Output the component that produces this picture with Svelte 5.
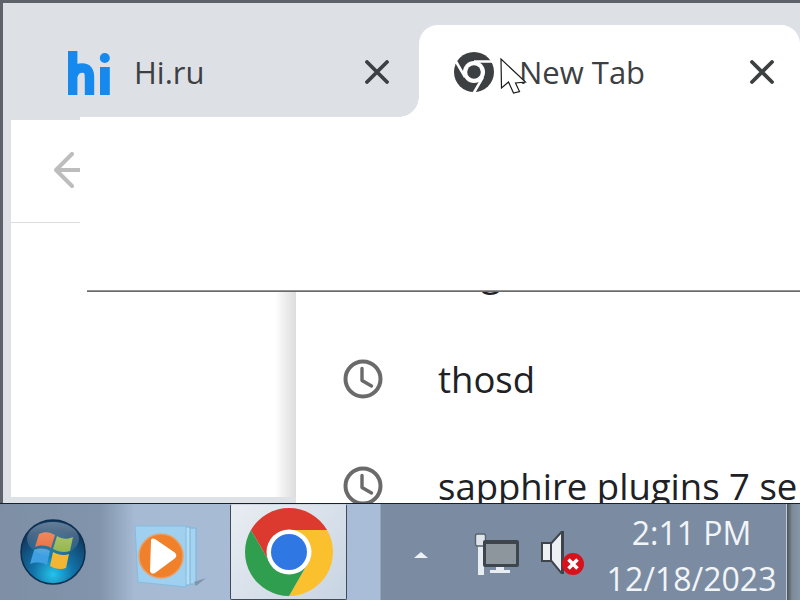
<script>
  const rows = [
    { text: 'img' },
    { text: 'thosd' },
    { text: 'sapphire plugins 7 serial' }
  ];
</script>

<div class="screen">
  <section class="window">
    <header class="tabstrip">
      <div class="tab inactive">
        <svg class="hi" viewBox="0 0 42 44" aria-hidden="true">
          <path class="hi-stroke" d="M4.7 0V44M4.7 26C6 19 10 17 14 17C20 17 21.5 20 21.5 27V44" />
          <circle class="hi-fill" cx="36.8" cy="7" r="5" />
          <rect class="hi-fill" x="32" y="16" width="9.8" height="28" />
        </svg>
        <span class="title">Hi.ru</span>
        <svg class="close" viewBox="0 0 24 24" aria-hidden="true"><path d="M2 2L22 22M22 2L2 22" /></svg>
      </div>
      <div class="tab active">
        <svg class="favicon" viewBox="-20 -20 40 40" aria-hidden="true">
          <circle r="20" fill="#3c4043" />
          <circle r="11" fill="#fff" />
          <circle r="6.8" fill="#3c4043" />
          <path class="cuts" d="M0 -10.5H18M-9 5.2L-18 -10.5M9 5.2L0 20.5" />
        </svg>
        <span class="title">New Tab</span>
        <svg class="close" viewBox="0 0 24 24" aria-hidden="true"><path d="M2 2L22 22M22 2L2 22" /></svg>
      </div>
    </header>

    <div class="page">
      <div class="toolbar">
        <svg class="back" viewBox="0 0 30 36" aria-hidden="true"><path d="M28 18H3M18 2L2 18L18 34" /></svg>
      </div>
      <div class="content">
        <div class="gutter"></div>
        <div class="results">
          {#each rows as row}
            <div class="row">
              <svg class="clock" viewBox="0 0 40 40" aria-hidden="true">
                <circle cx="20" cy="20" r="17.5" />
                <path d="M19 9.5V21.5L28.5 27" />
              </svg>
              <span>{row.text}</span>
            </div>
          {/each}
        </div>
      </div>
    </div>

    <div class="overlay"></div>

    <svg class="cursor" viewBox="0 0 30 40" aria-hidden="true">
      <path d="M1 1L1.5 30L8.5 24L13.5 35L19.5 33.5L15.5 25L25.5 24Z" />
    </svg>
  </section>

  <footer class="taskbar">
    <div class="start">
      <svg class="orb" viewBox="0 0 66 66" aria-hidden="true">
        <defs>
          <radialGradient id="orbfill" cx="50%" cy="85%" r="70%">
            <stop offset="0" stop-color="#25c3ea" />
            <stop offset="0.45" stop-color="#1273a8" />
            <stop offset="1" stop-color="#123a62" />
          </radialGradient>
          <linearGradient id="shine" x1="0" y1="0" x2="0" y2="1">
            <stop offset="0" stop-color="#fff" stop-opacity="0.35" />
            <stop offset="1" stop-color="#fff" stop-opacity="0.03" />
          </linearGradient>
        </defs>
        <circle cx="33" cy="33" r="32" fill="url(#orbfill)" stroke="#0d2f50" stroke-width="1.5" />
        <path d="M19 15C25 12 30 13 35 16L31 29C26 26 21 26 15 28Z" fill="#e8622c" />
        <path d="M37 17C42 20 47 21 53 18L50 32C44 34 39 33 33 30Z" fill="#8fb23f" />
        <path d="M14 31C20 29 25 29 30 32L27 46C21 43 16 43 10 45Z" fill="#3f9fe0" />
        <path d="M33 33C38 36 44 37 49 35L46 49C41 51 35 50 30 47Z" fill="#f2b632" />
        <ellipse cx="33" cy="20" rx="26" ry="17" fill="url(#shine)" />
      </svg>
    </div>
    <div class="launcher">
      <svg class="wmp" viewBox="0 0 76 66" aria-hidden="true">
        <path d="M54 4H62V60H54Z" fill="#a6d3ef" stroke="#79b4dc" />
        <path d="M48 3H56V61H48Z" fill="#b4dcf4" stroke="#79b4dc" />
        <path d="M1 2H52V63L4 58Z" fill="#9fd0ef" stroke="#82bde2" />
        <path d="M60 58L72 54L62 62Z" fill="#7f94ad" />
        <circle cx="27" cy="32" r="22" fill="#f0812a" stroke="#e8a06a" stroke-width="1.5" />
        <path d="M17 17C17 14 19 14 21 15L40 28C43 30 43 33 40 35L21 49C19 50 17 50 16 47Z" fill="#fff" />
      </svg>
    </div>
    <div class="chrome-btn">
      <svg class="chrome" viewBox="-45 -45 90 90" aria-hidden="true">
        <path d="M0 0L0 -22H38.1A44 44 0 0 0 -38.1 -22L-19 11Z" fill="#dc3a2e" />
        <path d="M0 -22H38.1A44 44 0 0 1 0 44L19 11Z" fill="#fbc02d" />
        <path d="M0 44A44 44 0 0 1 -38.1 -22L-19 11H19Z" fill="#2f9e4f" />
        <circle r="22.5" fill="#fff" />
        <circle r="18" fill="#2f78e4" />
      </svg>
    </div>
    <div class="spacer"></div>
    <div class="tray">
      <div class="caret"></div>
      <svg class="net" viewBox="0 0 46 42" aria-hidden="true">
        <rect x="4" y="4" width="6" height="38" fill="#e8edf2" />
        <rect x="1.5" y="1" width="10" height="12" rx="2" fill="#dfe5ea" stroke="#59636e" stroke-width="1.4" />
        <rect x="9" y="7" width="36" height="27" rx="2" fill="#3e454d" />
        <rect x="12" y="11" width="30" height="20" fill="#8d969d" />
        <rect x="22" y="34" width="8" height="3" fill="#e8edf2" />
        <rect x="16" y="37" width="20" height="3" fill="#e8edf2" />
      </svg>
      <svg class="speaker" viewBox="0 0 44 44" aria-hidden="true">
        <path d="M0 11H10L20 0H23V43H20L10 31H0Z" fill="#3d444c" />
        <path d="M2 13H9V29H2ZM11 13L20 3V40L11 29Z" fill="#eef1f3" />
        <circle cx="32" cy="33" r="11" fill="#d8121c" />
        <path d="M27.5 28.5L36.5 37.5M36.5 28.5L27.5 37.5" stroke="#fff" stroke-width="3.5" />
      </svg>
      <div class="clocktext">
        <span>2:11 PM</span>
        <span>12/18/2023</span>
      </div>
    </div>
    <div class="show-desktop"></div>
  </footer>
</div>

<style>
  :global(body) {
    margin: 0;
    background: #fff;
  }

  .screen {
    position: relative;
    width: 800px;
    height: 600px;
    overflow: hidden;
    display: flex;
    flex-direction: column;
    font-family: "Open Sans", "Noto Sans", sans-serif;
  }

  .window {
    position: relative;
    height: 500px;
    flex: none;
    overflow: hidden;
    display: flex;
    flex-direction: column;
    padding-left: 3px;
    background: #dee1e6;
    border-top: 3px solid #5d626b;
    box-shadow: inset 3px 0 0 #5d626b;
  }

  .tabstrip {
    height: 117px;
    flex: none;
    display: grid;
    grid-template-columns: 416px 1fr;
    background: #dde1e6;
  }

  .tab {
    display: flex;
    align-items: center;
    box-sizing: border-box;
    height: 92px;
    margin-top: 22px;
    padding-top: 2px;
    color: #3c4043;
  }

  .inactive {
    padding-left: 65px;
    padding-right: 30px;
  }

  .active {
    position: relative;
    background: #fff;
    border-radius: 19px 19px 0 0;
    padding-left: 35px;
    padding-right: 26px;
  }

  .active::before {
    content: "";
    position: absolute;
    left: -20px;
    bottom: 0;
    width: 20px;
    height: 20px;
    background: radial-gradient(circle at 0 0, transparent 19.5px, #fff 20px);
  }

  .hi {
    width: 42px;
    height: 44px;
    margin-top: 2px;
    flex: none;
  }

  .hi-stroke {
    fill: none;
    stroke: #1589ee;
    stroke-width: 9.4;
  }

  .hi-fill {
    fill: #1589ee;
  }

  .title {
    flex: 1;
    font-size: 31px;
    line-height: 40px;
    margin-left: 24px;
    white-space: nowrap;
  }

  .active .title {
    margin-left: 25px;
  }

  .close {
    width: 24px;
    height: 24px;
    flex: none;
    fill: none;
    stroke: #3c4043;
    stroke-width: 3.8;
    stroke-linecap: round;
  }

  .favicon {
    width: 40px;
    height: 40px;
    flex: none;
  }

  .cuts {
    fill: none;
    stroke: #fff;
    stroke-width: 2.6;
  }

  .page {
    flex: 1;
    min-height: 0;
    margin-left: 8px;
    background: #fff;
    display: flex;
    flex-direction: column;
  }

  .toolbar {
    height: 70px;
    flex: none;
    border-bottom: 1px solid #dadce0;
    padding-left: 43px;
    padding-top: 32px;
  }

  .back {
    display: block;
    width: 30px;
    height: 36px;
    fill: none;
    stroke: #bdbdbd;
    stroke-width: 4;
    stroke-linecap: round;
    stroke-linejoin: round;
  }

  .content {
    flex: 1;
    min-height: 0;
    display: flex;
  }

  .gutter {
    width: 285px;
    flex: none;
    background: linear-gradient(90deg, #fff 0, #fff 264px, #f1f1f1 272px, #dcdcdc 285px);
    border-bottom: 6px solid #dee1e6;
    box-sizing: border-box;
  }

  .results {
    flex: 1;
    min-width: 0;
    background: #fff;
    color: #202124;
  }

  .row {
    height: 107px;
    display: flex;
    align-items: center;
    gap: 55px;
    padding-left: 47px;
    font-size: 36.5px;
    white-space: nowrap;
  }

  .row:first-child {
    margin-top: -5px;
  }

  .clock {
    width: 40px;
    height: 40px;
    flex: none;
    fill: none;
    stroke: #6a6a6a;
    stroke-width: 4;
  }

  .clock path {
    stroke-linecap: round;
    stroke-linejoin: round;
    stroke-width: 3.4;
  }

  .overlay {
    position: absolute;
    left: 80px;
    right: 0;
    top: 114px;
    height: 175px;
    background: #fff;
  }

  .overlay::after {
    content: "";
    position: absolute;
    left: 7px;
    right: 0;
    bottom: 0;
    height: 2px;
    background: linear-gradient(#a8a8a8, #555);
  }

  .cursor {
    position: absolute;
    left: 500px;
    top: 55px;
    width: 30px;
    height: 40px;
    fill: #fff;
    stroke: #1c1c1c;
    stroke-width: 1.2;
  }

  .taskbar {
    height: 97px;
    flex: none;
    box-sizing: border-box;
    border-top: 1px solid #18222e;
    display: flex;
    align-items: stretch;
    background: linear-gradient(90deg, #7e8fa5 0, #8194ab 100px, #a6bad4 135px, #a9bdd8 380px, #7b8ca2 381px, #7b8ca2 100%);
  }

  .start {
    width: 130px;
    flex: none;
    display: flex;
    align-items: center;
    padding-left: 20px;
    box-sizing: border-box;
  }

  .orb {
    width: 66px;
    height: 66px;
  }

  .launcher {
    width: 100px;
    flex: none;
    display: flex;
    align-items: center;
    padding-left: 4px;
    box-sizing: border-box;
  }

  .wmp {
    width: 76px;
    height: 66px;
    margin-top: 10px;
  }

  .chrome-btn {
    width: 117px;
    flex: none;
    box-sizing: border-box;
    border: 1px solid #3f4b59;
    border-top-color: #cfd8e2;
    border-radius: 2px;
    background: linear-gradient(135deg, #e9edf2, #c8d4e3);
    display: flex;
    align-items: center;
    justify-content: center;
  }

  .chrome {
    width: 90px;
    height: 90px;
  }

  .spacer {
    flex: 1;
  }

  .tray {
    width: 372px;
    flex: none;
    position: absolute;
    right: 14px;
    bottom: 0;
    height: 96px;
    display: flex;
    align-items: center;
  }

  .caret {
    width: 0;
    height: 0;
    border-left: 7px solid transparent;
    border-right: 7px solid transparent;
    border-bottom: 6px solid #eef2f6;
    margin-top: 6px;
    flex: none;
  }

  .net {
    width: 46px;
    height: 42px;
    margin-left: 46px;
    margin-top: 4px;
    flex: none;
  }

  .speaker {
    width: 44px;
    height: 44px;
    margin-left: 21px;
    margin-top: 2px;
    flex: none;
  }

  .clocktext {
    flex: 1;
    display: flex;
    flex-direction: column;
    align-items: center;
    color: #f2f5f8;
    font-size: 32px;
    line-height: 46px;
    white-space: nowrap;
    padding-left: 12px;
    margin-top: 8px;
  }

  .show-desktop {
    position: absolute;
    right: 0;
    bottom: 0;
    width: 14px;
    height: 96px;
    background: linear-gradient(90deg, #4a525c, #7e8a97 40%, #8796a8);
    border-left: 1px solid #c3ccd6;
    box-sizing: border-box;
  }
</style>
